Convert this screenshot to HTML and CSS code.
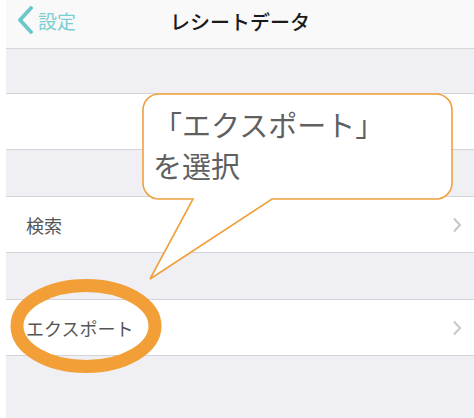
FILE: index.html
```html
<!DOCTYPE html>
<html lang="ja">
  <head>
    <meta charset="UTF-8" />
    <meta name="viewport" content="width=device-width, initial-scale=1.0" />
    <title>レシートデータ</title>
    <link rel="stylesheet" href="styles.css">
  </head>
  <body>
    <div class="screen">
      <header class="navbar">
        <a class="back" href="#">
          <svg class="back-icon" width="18" height="28" viewBox="0 0 18 28">
            <path d="M15 2 L4 14 L15 26" fill="none" stroke="#6cc7c8" stroke-width="3.8" stroke-linecap="round" stroke-linejoin="round" />
          </svg>
          <span>設定</span>
        </a>
        <h1 class="title">レシートデータ</h1>
      </header>

      <ul class="group group-first">
        <li class="cell cell-empty"></li>
      </ul>
      <ul class="group">
        <li class="cell">
          <span>検索</span>
          <svg class="chevron" width="10" height="16" viewBox="0 0 10 16">
            <path d="M2 1.5 L8 8 L2 14.5" fill="none" stroke="#c7c7cc" stroke-width="2" />
          </svg>
        </li>
      </ul>
      <ul class="group">
        <li class="cell">
          <span>エクスポート</span>
          <svg class="chevron" width="10" height="16" viewBox="0 0 10 16">
            <path d="M2 1.5 L8 8 L2 14.5" fill="none" stroke="#c7c7cc" stroke-width="2" />
          </svg>
        </li>
      </ul>

      <!-- annotation layer -->
      <svg class="marks" width="474" height="418" viewBox="0 0 474 418">
        <path d="M159 94 H436 A16 16 0 0 1 452 110 V183 A16 16 0 0 1 436 199 H272 L150 279 L193 199 H159 A16 16 0 0 1 143 183 V110 A16 16 0 0 1 159 94 Z"
              fill="#fff" stroke="#f0a03c" stroke-width="1.6" stroke-linejoin="miter" />
        <ellipse cx="86" cy="326" rx="69" ry="40.5" fill="none" stroke="#f29f38" stroke-width="13" />
      </svg>
      <div class="bubble-text">
        <p>「エクスポート」</p>
        <p>を選択</p>
      </div>
    </div>
  </body>
</html>
```

FILE: styles.css
```css
html, body {
  margin: 0;
  padding: 0;
  background-color: #fff;
}
body {
  font-family: "Noto Sans CJK JP", "Noto Sans", sans-serif;
  color: #555;
}
.screen {
  position: relative;
  margin-left: 6px;
  height: 418px;
  background-color: #efeff4;
  overflow: hidden;
}
.navbar {
  position: relative;
  height: 48px;
  background-color: #f9f9f9;
  border-bottom: 1px solid #d6d6d9;
  display: flex;
  align-items: center;
  justify-content: center;
}
.back {
  position: absolute;
  left: 10px;
  top: 6px;
  display: flex;
  align-items: center;
  gap: 4px;
  color: #7ccfcf;
  font-size: 19px;
  text-decoration: none;
}
.title {
  margin: 0 0 6px;
  font-size: 20px;
  font-weight: 500;
  color: #1a1a1a;
}
.group {
  list-style: none;
  margin: 46px 0 0;
  padding: 0;
  background-color: #fff;
  border-top: 1px solid #d3d3d8;
  border-bottom: 1px solid #d3d3d8;
}
.group-first {
  margin-top: 44px;
}
.cell {
  height: 55px;
  display: flex;
  align-items: center;
  justify-content: space-between;
  padding: 0 12px 0 20px;
  font-size: 18px;
  color: #555;
}
.marks {
  position: absolute;
  left: -6px;
  top: 0;
  pointer-events: none;
}
.bubble-text {
  position: absolute;
  left: 147px;
  top: 104px;
  font-size: 29px;
  line-height: 41px;
  color: #5f5f5f;
}
.bubble-text p {
  margin: 0;
}
```
